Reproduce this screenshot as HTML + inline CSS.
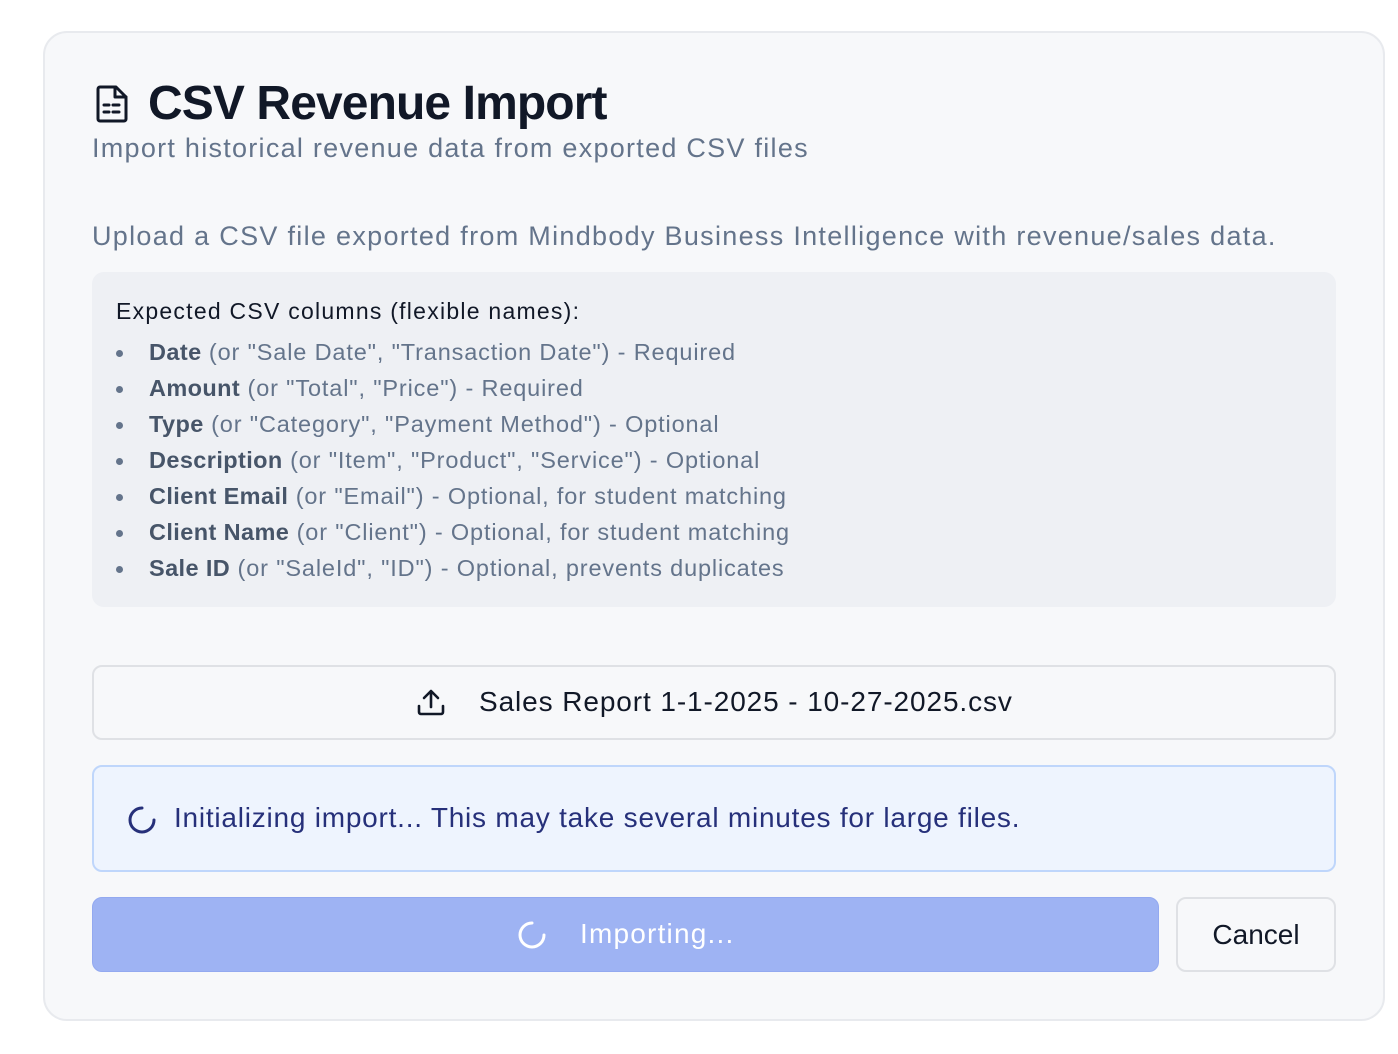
<!DOCTYPE html>
<html><head><meta charset="utf-8"><style>
*{box-sizing:border-box;margin:0;padding:0}
body{width:1398px;height:1054px;background:#fff;font-family:"Liberation Sans",sans-serif;position:relative;overflow:hidden}
.card{position:absolute;left:43px;top:31px;width:1342px;height:990px;background:#f7f8fa;border:2px solid #e8eaee;border-radius:24px}
.abs{position:absolute;white-space:nowrap}
h1{position:absolute;left:148px;top:76px;font-size:48px;font-weight:bold;color:#111827;letter-spacing:-0.9px}
.sub{left:92px;top:133px;font-size:27px;color:#64748b;letter-spacing:1.27px}
.desc{left:92px;top:221px;font-size:27px;color:#64748b;letter-spacing:1.3px}
.box{position:absolute;left:92px;top:272px;width:1244px;height:335px;background:#eef0f4;border-radius:12px}
.box .hd{position:absolute;left:24px;top:26px;font-size:23px;color:#111827;letter-spacing:1.25px}
.box ul{position:absolute;left:24px;top:64px;list-style:none}
.box li{font-size:23.5px;color:#64748b;height:36px;line-height:32px;position:relative;padding-left:33px;white-space:nowrap;letter-spacing:0.85px}
.box li:before{content:"";position:absolute;left:0;top:14px;width:7px;height:7px;border-radius:50%;background:#64748b}
.box li b{color:#475569;font-weight:bold;letter-spacing:0.4px}
.up{position:absolute;left:92px;top:665px;width:1244px;height:75px;border:2px solid #dfe1e5;border-radius:10px;background:#f7f8fa}
.info{position:absolute;left:92px;top:765px;width:1244px;height:107px;border:2px solid #bfd6fb;border-radius:10px;background:#eef4fe}
.btn{position:absolute;left:92px;top:897px;width:1067px;height:75px;border-radius:10px;background:#9eb3f3;border:1px solid #93a9f0}
.cancel{position:absolute;left:1176px;top:897px;width:160px;height:75px;border-radius:10px;border:2px solid #dfe1e5;background:#f7f8fa;font-size:28px;color:#111827;text-align:center;line-height:71px}
</style></head><body>
<div class="card"></div>
<svg class="abs" style="left:95px;top:85px" width="34" height="38" viewBox="0 0 34 38" fill="none" stroke="#111827" stroke-width="3" stroke-linejoin="round" stroke-linecap="round"><path d="M5 2h16l10 10v22a2 2 0 0 1-2 2H5a2 2 0 0 1-2-2V4a2 2 0 0 1 2-2z"/><path d="M20 2v10h11"/><path d="M9 20h5M18 20h6M9 27h5M18 27h6"/></svg>
<h1>CSV Revenue Import</h1>
<div class="abs sub">Import historical revenue data from exported CSV files</div>
<div class="abs desc">Upload a CSV file exported from Mindbody Business Intelligence with revenue/sales data.</div>
<div class="box">
<div class="hd abs">Expected CSV columns (flexible names):</div>
<ul>
<li><b>Date</b> (or "Sale Date", "Transaction Date") - Required</li>
<li><b>Amount</b> (or "Total", "Price") - Required</li>
<li><b>Type</b> (or "Category", "Payment Method") - Optional</li>
<li><b>Description</b> (or "Item", "Product", "Service") - Optional</li>
<li><b>Client Email</b> (or "Email") - Optional, for student matching</li>
<li><b>Client Name</b> (or "Client") - Optional, for student matching</li>
<li><b>Sale ID</b> (or "SaleId", "ID") - Optional, prevents duplicates</li>
</ul></div>
<div class="up"></div>
<svg class="abs" style="left:416px;top:688px" width="30" height="28" viewBox="0 0 30 28" fill="none" stroke="#111827" stroke-width="2.6" stroke-linecap="round" stroke-linejoin="round"><path d="M15 19V3M8 10l7-7 7 7"/><path d="M3 18v6a2 2 0 0 0 2 2h20a2 2 0 0 0 2-2v-6"/></svg>
<div class="abs" style="left:479px;top:686px;font-size:28px;color:#111827;letter-spacing:0.9px">Sales Report 1-1-2025 - 10-27-2025.csv</div>
<div class="info"></div>
<svg class="abs" style="left:127px;top:805px" width="30" height="30" viewBox="0 0 30 30" fill="none" stroke="#26307a" stroke-width="3" stroke-linecap="round"><path d="M15 3A12 12 0 1 0 27 15"/></svg>
<div class="abs" style="left:174px;top:802px;font-size:28px;color:#26307a;letter-spacing:0.77px">Initializing import... This may take several minutes for large files.</div>
<div class="btn"></div>
<svg class="abs" style="left:517px;top:920px" width="30" height="30" viewBox="0 0 30 30" fill="none" stroke="#fff" stroke-width="3" stroke-linecap="round"><path d="M15 3A12 12 0 1 0 27 15"/></svg>
<div class="abs" style="left:580px;top:918px;font-size:28px;color:#fff;letter-spacing:1.2px">Importing...</div>
<div class="cancel">Cancel</div>
</body></html>
